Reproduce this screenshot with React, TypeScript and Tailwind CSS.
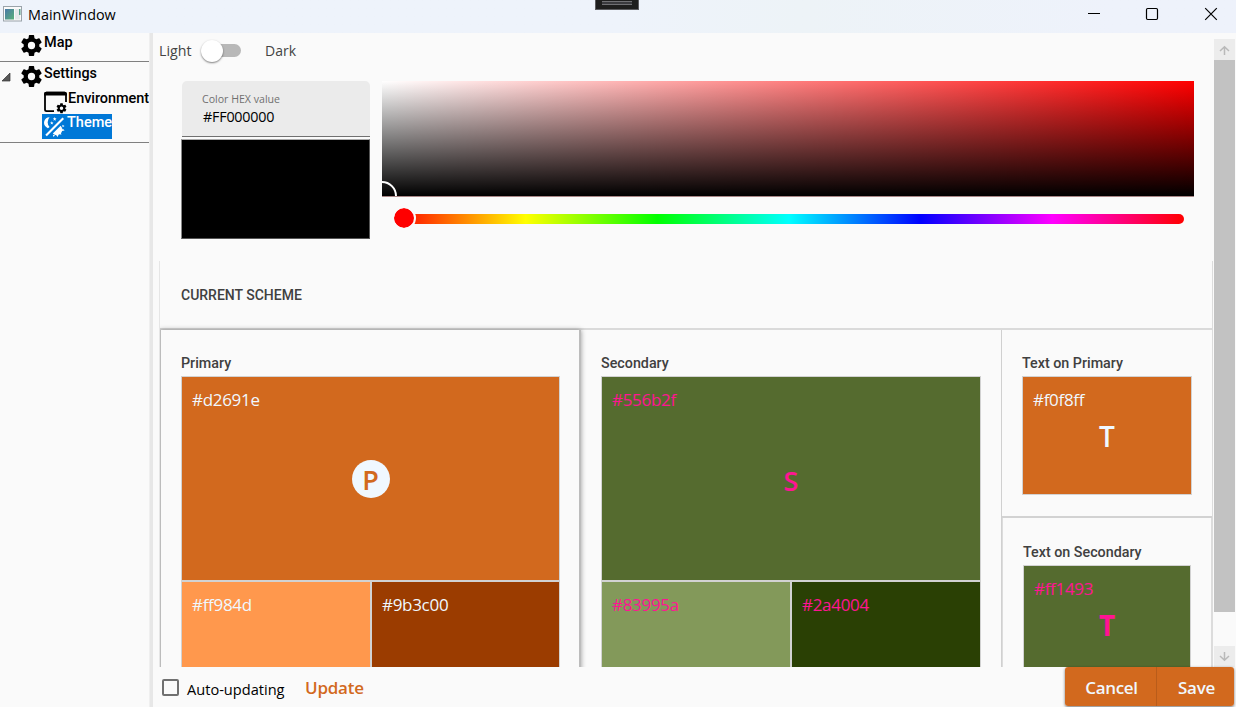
import React from "react";

const COG =
  "M12,15.5A3.5,3.5 0 0,1 8.5,12A3.5,3.5 0 0,1 12,8.5A3.5,3.5 0 0,1 15.5,12A3.5,3.5 0 0,1 12,15.5M19.43,12.97C19.47,12.65 19.5,12.33 19.5,12C19.5,11.67 19.47,11.34 19.43,11L21.54,9.37C21.73,9.22 21.78,8.95 21.66,8.73L19.66,5.27C19.54,5.05 19.27,4.96 19.05,5.05L16.56,6.05C16.04,5.66 15.5,5.32 14.87,5.07L14.5,2.42C14.46,2.18 14.25,2 14,2H10C9.75,2 9.54,2.18 9.5,2.42L9.13,5.07C8.5,5.32 7.96,5.66 7.44,6.05L4.95,5.05C4.73,4.96 4.46,5.05 4.34,5.27L2.34,8.73C2.21,8.95 2.27,9.22 2.46,9.37L4.57,11C4.53,11.34 4.5,11.67 4.5,12C4.5,12.33 4.53,12.65 4.57,12.97L2.46,14.63C2.27,14.78 2.21,15.05 2.34,15.27L4.34,18.73C4.46,18.95 4.73,19.03 4.95,18.95L7.44,17.94C7.96,18.34 8.5,18.68 9.13,18.93L9.5,21.58C9.54,21.82 9.75,22 10,22H14C14.25,22 14.46,21.82 14.5,21.58L14.87,18.93C15.5,18.67 16.04,18.34 16.56,17.94L19.05,18.95C19.27,19.03 19.54,18.95 19.66,18.73L21.66,15.27C21.78,15.05 21.73,14.78 21.54,14.63L19.43,12.97Z";

function CogIcon() {
  return (
    <svg className="h-[25px] w-[25px] shrink-0" viewBox="0 0 24 24">
      <path d={COG} fill="#000" />
    </svg>
  );
}

function EnvironmentIcon() {
  return (
    <svg className="mt-px h-6 w-[26px] shrink-0" viewBox="0 0 26 24">
      <path
        d="M12 21.2H4.6Q3 21.2 3 19.6V4.2Q3 2.6 4.600 2.600H22.400Q24 2.600 24 4.200V12"
        fill="none"
        stroke="#000"
        strokeWidth="1.8"
      />
      <path d="M2.100 5.500V4Q2.100 1.700 4.400 1.700H22.600Q24.900 1.700 24.900 4V5.500Z" fill="#000" />
      <g transform="translate(13.500 12.200) scale(.5)">
        <path d={COG} fill="#000" />
      </g>
    </svg>
  );
}

function ThemeIcon() {
  return (
    <svg className="h-[25px] w-[25px] shrink-0" viewBox="0 0 25 25">
      <path d="M3.300 20.800L20.500 3.600L22 5.100L4.800 22.300Z" fill="#fff" />
      <path
        d="M7.600 3.300A5.400 5.400 0 0 0 4.500 13.200L5.900 14.200L7.600 13A7 7 0 0 1 7.600 3.300Z"
        fill="#fff"
      />
      <path
        d="M12.700 3L13.200 4.300L14.600 4.400L13.500 5.300L13.900 6.700L12.700 5.900L11.500 6.700L11.900 5.300L10.800 4.400L12.200 4.300ZM9.800 7.200L10.300 8.400L11.500 8.500L10.600 9.300L10.900 10.500L9.800 9.800L8.700 10.500L9 9.300L8.100 8.500L9.300 8.400Z"
        fill="#fff"
      />
      <path
        d="M18.600 11.800A5.500 5.500 0 0 1 10.800 19.600ZM20.300 10.700L22.500 11.900L20.600 13.200ZM20.600 14.600L22.600 16.600L19.900 17ZM18.700 18.300L19.400 20.800L16.900 20ZM10.800 20.800L13 21.200L11.500 22.900ZM14.200 21.200L16.500 20.600L15.800 23Z"
        fill="#fff"
      />
    </svg>
  );
}

function TitleBar() {
  return (
    <header className="relative flex h-[33px] shrink-0 items-start bg-gradient-to-r from-[#eef3fb] from-50% via-[#edf3f7] via-65% to-[#eef2fb] to-90%">
      <svg className="mt-[6px] ml-[3px] h-4 w-[19px]" viewBox="0 0 19 16">
        <defs>
          <linearGradient id="app" x1="0" y1="0" x2="1" y2="1">
            <stop offset="0" stopColor="#4878a8" />
            <stop offset="1" stopColor="#58b078" />
          </linearGradient>
        </defs>
        <rect x=".5" y=".5" width="18" height="14.500" fill="#fafafa" stroke="#9aa3aa" />
        <rect x="2" y="3" width="9" height="10.500" fill="url(#app)" />
        <rect x="12" y="3" width="5" height="10.500" fill="#e4e8ea" />
        <rect x="16" y="3" width="1.500" height="6" fill="#56a08c" />
      </svg>
      <span className="mt-[5px] ml-[6px] text-[14.400px] leading-5 text-black">MainWindow</span>
      <div className="absolute top-[-2px] left-[595px] h-3 w-11 border border-[#5c5c60] bg-[#1e1e1e] px-[6px] pt-[2px]">
        <div className="h-1 border-y border-[#707074] bg-[#3a3a3e]" />
      </div>
      <svg className="mt-[7px] mr-[17px] ml-auto h-[14px] w-[132px]" viewBox="0 0 132 14" fill="none" stroke="#000">
        <path d="M1 6.500H13" />
        <rect x="59.500" y="1.500" width="11" height="11" rx="1.200" strokeWidth="1.200" />
        <path d="M118.200 1.200L129.800 12.800M129.800 1.200L118.200 12.800" strokeWidth="1.200" />
      </svg>
    </header>
  );
}

function Sidebar() {
  return (
    <nav className="w-[149px] shrink-0 overflow-hidden font-['Roboto',sans-serif] text-[15px] leading-5 font-medium text-black">
      <div className="flex h-[29px] border-b border-[#808080] pl-[19px]">
        <CogIcon />
        <span className="text-[14.500px]">Map</span>
      </div>
      <div className="h-[81px] border-b border-[#808080]">
        <div className="flex h-[27px] pt-[2px]">
          <svg className="mt-2 ml-px h-[10px] w-[10px]" viewBox="0 0 10 10">
            <path d="M9 1V9H1Z" fill="#595959" stroke="#333" strokeWidth=".7" />
          </svg>
          <span className="ml-2 flex">
            <CogIcon />
          </span>
          <span className="-mt-px text-[14.300px]">Settings</span>
        </div>
        <div className="flex h-[25px] pl-[42px]">
          <EnvironmentIcon />
          <span className="text-[14.500px] tracking-[-0.050px]">Environment</span>
        </div>
        <div className="ml-[42px] flex h-[25px] w-[70px] bg-[#0078d7] text-white">
          <ThemeIcon />
          <span className="text-[14.500px] leading-[18px]">Theme</span>
        </div>
      </div>
    </nav>
  );
}

function ModeToggle() {
  return (
    <div className="flex h-12 items-start pt-2 text-[14.200px] leading-5 text-[#444]">
      <span className="w-[42px]">Light</span>
      <div className="-mt-px flex h-5 w-10 items-center">
        <div className="mt-px ml-[9px] flex h-[13px] w-[31px] items-center rounded-full bg-[#b8b8b8]">
          <div className="-ml-[9px] h-[22px] w-[22px] shrink-0 rounded-full bg-white shadow-[0_1px_2px_rgba(0,0,0,.5)]" />
        </div>
      </div>
      <span className="ml-[24px] text-[14px]">Dark</span>
    </div>
  );
}

function ColorPicker() {
  return (
    <section className="flex h-[180px] pl-[22px]">
      <div className="w-[189px]">
        <div className="ml-px flex h-[56px] flex-col rounded-t-[5px] border-b border-[#707070] bg-[#ebebeb] pt-[11px] pl-5">
          <span className="text-[10.600px] leading-[14px] text-[#707070]">Color HEX value</span>
          <span className="mt-px ml-px text-[14.300px] leading-5 tracking-[-0.200px] text-black">#FF000000</span>
        </div>
        <div className="mt-[2px] h-[100px] border border-t-[#aaa] border-r-[#555] border-b-[#555] border-l-[#888] bg-black" />
      </div>
      <div className="ml-3 w-[812px]">
        <div className="flex h-[116px] items-end overflow-hidden border-b border-[#a98686] bg-[linear-gradient(to_top,#000,transparent),linear-gradient(to_right,#fff,#f00)]">
          <div className="-mb-[15px] -ml-[15px] h-[30px] w-[30px] shrink-0 rounded-full border-2 border-white" />
        </div>
        <div className="mt-[17px] mr-[10px] ml-3 flex h-[10px] items-center rounded-full bg-[linear-gradient(to_right,#f00,#ff0,#0f0,#0ff,#00f,#f0f,#f00)]">
          <div className="-mt-[2px] -ml-[2px] h-6 w-6 shrink-0 rounded-full bg-[#f00] bg-clip-padding border-2 border-[#fafafa]" />
        </div>
      </div>
    </section>
  );
}

function Heading({ children }: { children: React.ReactNode }) {
  return (
    <h3 className="font-['Roboto',sans-serif] text-[14.300px] leading-5 font-medium text-[#404040]">{children}</h3>
  );
}

function Swatch({ hex, className, children }: { hex: string; className: string; children?: React.ReactNode }) {
  return (
    <div className={`grid border border-[#d2d2d2] ${className}`}>
      <span className="col-start-1 row-start-1 pt-[10px] pl-[10px] text-[17px] leading-[26px] tracking-[-0.300px]">
        {hex}
      </span>
      {children}
    </div>
  );
}

function Scheme() {
  return (
    <section className="ml-px h-[406px] w-[1053px] overflow-hidden border-r border-[#dcdcdc] shadow-[-1px_0_0_#e6e6e6]">
      <div className="h-[69px] border-b-2 border-[#dadada] pt-6 pl-[21px]">
        <h2 className="font-['Roboto',sans-serif] text-[14px] leading-5 font-medium text-[#404040]">
          CURRENT SCHEME
        </h2>
      </div>
      <div className="flex h-[337px]">
        <div className="z-10 h-[380px] w-[421px] border-r-2 border-l border-[#bcbcbc] pt-[23px] pl-5 shadow-[0_0_5px_rgba(0,0,0,.4)]">
          <Heading>Primary</Heading>
          <div className="mt-[3px] w-[379px]">
            <Swatch hex="#d2691e" className="h-[205px] bg-[#d2691e] text-[#f0f8ff]">
              <div className="col-start-1 row-start-1 flex h-[38px] w-[38px] items-center justify-center self-center justify-self-center rounded-full bg-[#f0f8ff] pt-[3px] text-[27px] font-semibold text-[#d2691e]">
                P
              </div>
            </Swatch>
            <div className="flex">
              <Swatch hex="#ff984d" className="h-[120px] w-[190px] bg-[#ff984d] text-[#f0f8ff]" />
              <Swatch hex="#9b3c00" className="h-[120px] w-[189px] bg-[#9b3c00] text-[#f0f8ff]" />
            </div>
          </div>
        </div>
        <div className="w-[421px] border-r border-[#d0d0d0] pt-[23px] pl-5">
          <Heading>Secondary</Heading>
          <div className="mt-[3px] w-[380px]">
            <Swatch hex="#556b2f" className="h-[205px] bg-[#556b2f] text-[#ff1493]">
              <span className="col-start-1 row-start-1 self-center justify-self-center pt-[4px] text-[27px] leading-9 font-semibold">
                S
              </span>
            </Swatch>
            <div className="flex">
              <Swatch hex="#83995a" className="h-[120px] w-[190px] bg-[#83995a] text-[#ff1493]" />
              <Swatch hex="#2a4004" className="h-[120px] w-[190px] bg-[#2a4004] text-[#ff1493]" />
            </div>
          </div>
        </div>
        <div className="w-[210px]">
          <div className="h-[188px] border-b-2 border-[#d2d2d2] pt-[23px] pl-5">
            <Heading>Text on Primary</Heading>
            <Swatch hex="#f0f8ff" className="mt-[3px] h-[119px] w-[170px] bg-[#d2691e] text-[#f0f8ff]">
              <span className="col-start-1 row-start-1 self-center justify-self-center pt-px text-[28px] leading-9 font-semibold">
                T
              </span>
            </Swatch>
          </div>
          <div className="h-[149px] border-x border-[#dcdcdc] pt-6 pl-5">
            <Heading>Text on Secondary</Heading>
            <Swatch hex="#ff1493" className="mt-[3px] h-[119px] w-[168px] bg-[#556b2f] text-[#ff1493]">
              <span className="col-start-1 row-start-1 self-center justify-self-center pt-px text-[28px] leading-9 font-bold">
                T
              </span>
            </Swatch>
          </div>
        </div>
      </div>
    </section>
  );
}

function Arrow({ down }: { down?: boolean }) {
  return (
    <div className="flex h-[21px] items-center justify-center bg-[#ececec]">
      <svg className={down ? "h-[11px] w-[11px] rotate-180" : "mt-[2px] h-[11px] w-[11px]"} viewBox="0 0 11 11">
        <path d="M5.500 10V2M1 6L5.500 1.800L10 6" fill="none" stroke="#b9b9b9" strokeWidth="1.500" />
      </svg>
    </div>
  );
}

export default function App() {
  return (
    <div className="flex h-[707px] w-[1236px] flex-col overflow-hidden bg-[#fafafa] font-['Open_Sans','Noto_Sans',sans-serif]">
      <TitleBar />
      <div className="flex min-h-0 flex-1">
        <Sidebar />
        <div className="w-1 shrink-0 border-l border-l-[#efefef] bg-[#e7e7e7]" />
        <main className="flex min-w-0 flex-1 flex-col">
          <div className="flex h-[634px] shrink-0 overflow-hidden">
            <div className="w-[1061px] pl-[6px]">
              <ModeToggle />
              <ColorPicker />
              <Scheme />
            </div>
            <div className="mt-[6px] flex w-[21px] flex-col">
              <Arrow />
              <div className="h-[552px] bg-[#c2c2c2]" />
              <div className="mt-auto">
                <Arrow down />
              </div>
            </div>
          </div>
          <footer className="z-20 flex h-10 pl-[9px]">
            <div className="mt-3 h-[17px] w-[17px] rounded-[2px] border-2 border-[#707070]" />
            <span className="mt-[12px] ml-2 w-[118px] text-[14.600px] leading-5 text-black">Auto-updating</span>
            <span className="mt-[9px] text-[17px] leading-6 font-semibold tracking-[-0.250px] text-[#d2691e]">
              Update
            </span>
            <div className="mr-[2px] ml-auto flex h-[39px] rounded-[3px] text-[17px] font-semibold tracking-[-0.300px] text-[#f0f8ff] shadow-[0_1px_3px_rgba(0,0,0,.55)]">
              <button className="w-[92px] rounded-l-[3px] border-r border-[#b95c1a] bg-[#d2691e] pt-[2px] pl-[2px]">
                Cancel
              </button>
              <button className="w-[77px] rounded-r-[3px] bg-[#d2691e] pt-[2px] pl-[2px]">Save</button>
            </div>
          </footer>
        </main>
      </div>
    </div>
  );
}
